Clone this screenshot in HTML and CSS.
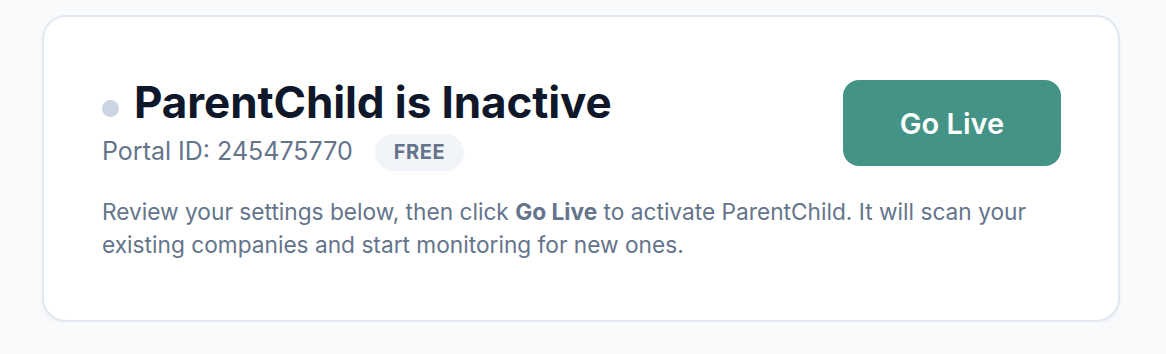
FILE: index.html
```html
<!DOCTYPE html>
<html>
<head>
    <title>ParentChild Status</title>
    <link rel="stylesheet" href="styles.css">
</head>
<body>
    <div class="page">
        <div class="status-card">
            <div class="status-top">
                <div class="status-info">
                    <h1 class="status-title"><span class="status-dot"></span>ParentChild is Inactive</h1>
                    <div class="status-meta">
                        <span class="portal-id">Portal ID: 245475770</span>
                        <span class="plan-badge">FREE</span>
                    </div>
                </div>
                <button class="go-live-btn">Go Live</button>
            </div>
            <p class="status-desc">Review your settings below, then click <b>Go Live</b> to activate ParentChild. It will scan your existing companies and start monitoring for new ones.</p>
        </div>
    </div>
</body>
</html>
```

FILE: styles.css
```css
body {
    margin: 0;
    background-color: #f8fafc;
    font-family: Inter, "Noto Sans", sans-serif;
}

.page {
    padding: 15px 46px 0 42px;
}

.status-card {
    background: #ffffff;
    border: 2px solid #e2e8f0;
    border-radius: 24px;
    padding: 59px 57px 59px 58px;
    box-shadow: 0 2px 4px rgba(15, 23, 42, 0.04);
}

.status-top {
    display: flex;
    justify-content: space-between;
    align-items: flex-start;
}

.status-title {
    margin: 0;
    display: flex;
    align-items: center;
    font-size: 44px;
    font-weight: 700;
    color: #0f172a;
    line-height: 52px;
    letter-spacing: -0.1px;
}

.status-dot {
    flex: none;
    width: 17px;
    height: 17px;
    border-radius: 50%;
    background: #cbd5e1;
    margin-right: 15px;
    margin-top: 13px;
}

.status-meta {
    display: flex;
    align-items: center;
    gap: 22px;
    margin-top: 6px;
}

.portal-id {
    font-size: 25px;
    line-height: 30px;
    color: #64748b;
    margin-top: -3px;
}

.plan-badge {
    background: #f1f5f9;
    color: #64748b;
    font-size: 20px;
    line-height: 25px;
    font-weight: 700;
    padding: 6px 19px;
    border-radius: 999px;
    letter-spacing: 0.6px;
}

.go-live-btn {
    margin-top: 4px;
    width: 218px;
    height: 86px;
    border: none;
    border-radius: 16px;
    background: #439486;
    color: #ffffff;
    font-family: Inter, sans-serif;
    font-size: 29px;
    font-weight: 600;
    cursor: pointer;
}

.status-desc {
    margin: 24px 0 0 0;
    font-size: 22.7px;
    line-height: 33px;
    color: #64748b;
}

.status-desc b {
    font-weight: 700;
}
```
